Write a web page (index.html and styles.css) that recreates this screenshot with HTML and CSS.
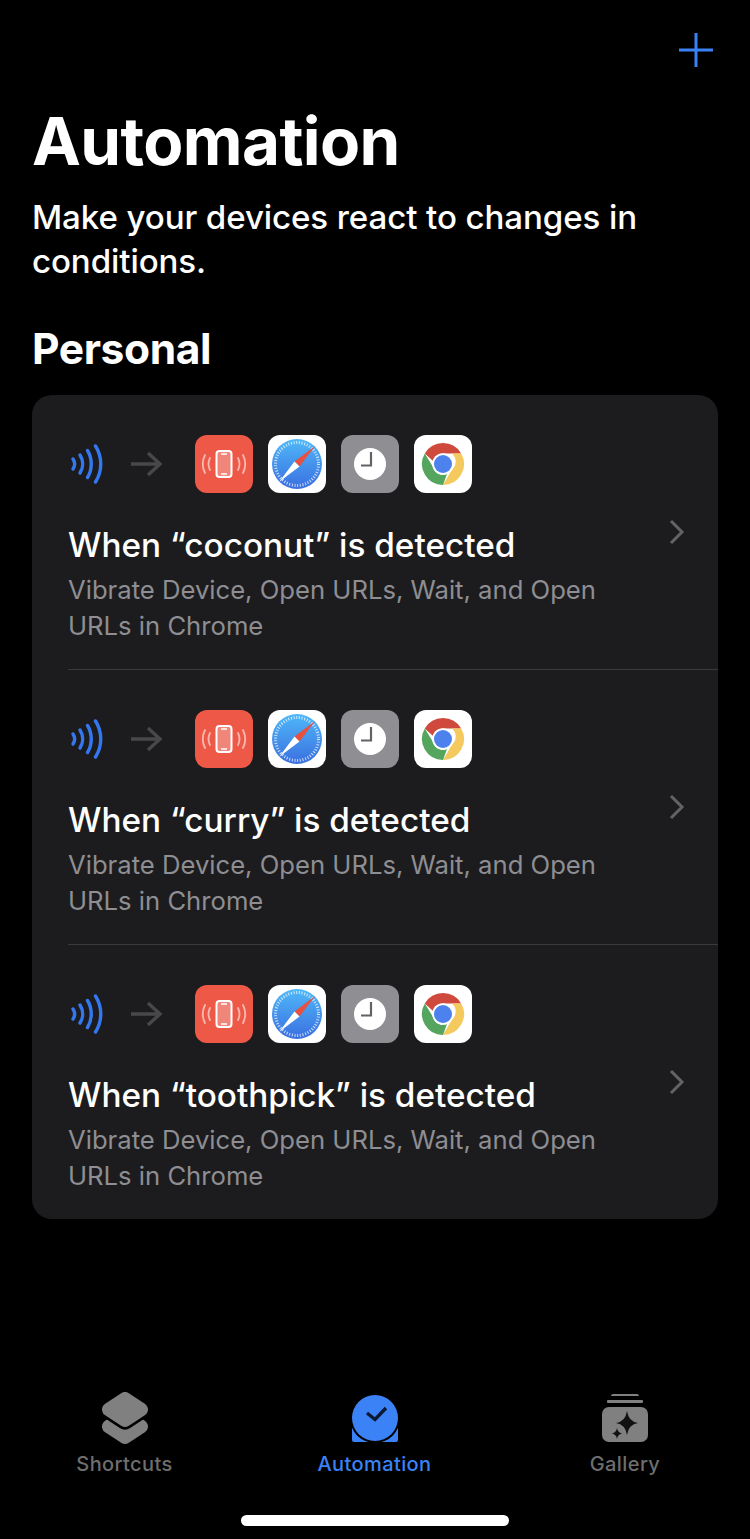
FILE: index.html
```html
<!DOCTYPE html>
<html lang="en">
<head>
    <meta charset="UTF-8">
    <title>Automation</title>
    <link rel="stylesheet" href="styles.css">
</head>
<body>
    <svg class="defs" width="0" height="0">
        <defs>
            <linearGradient id="safariBlue" x1="0" y1="0" x2="0" y2="1">
                <stop offset="0" stop-color="#4fb8f8"/>
                <stop offset="1" stop-color="#3a6fe0"/>
            </linearGradient>
            <symbol id="nfc" viewBox="0 0 34 40">
                <g fill="none" stroke="#3478f0" stroke-width="3.4" stroke-linecap="round">
                    <path d="M3 15c2 3 2 7 0 10"/>
                    <path d="M10 11c3.5 5.5 3.5 12.500 0 18"/>
                    <path d="M17.500 6.500c5 8 5 19 0 27"/>
                    <path d="M25.500 2c7 11 7 25 0 36"/>
                </g>
            </symbol>
            <symbol id="arrow" viewBox="0 0 34 28">
                <path d="M2 14h29M19 3l12 11-12 11" fill="none" stroke="#48484a" stroke-width="3.400"/>
            </symbol>
            <symbol id="vibrate" viewBox="0 0 58 58">
                <rect width="58" height="58" rx="12" fill="#ee5847"/>
                <rect x="21.500" y="16" width="15" height="26" rx="3" fill="#f0857a" stroke="#fff" stroke-width="2"/>
                <path d="M26 19h6M26 39h6" stroke="#fff" stroke-width="1.400"/>
                <g fill="none" stroke="#f8b9b1" stroke-width="1.800" stroke-linecap="round">
                    <path d="M15 23c-2 4-2 8 0 12M10 20c-3 6-3 12 0 18"/>
                    <path d="M43 23c2 4 2 8 0 12M48 20c3 6 3 12 0 18"/>
                </g>
            </symbol>
            <symbol id="safari" viewBox="0 0 58 58">
                <rect width="58" height="58" rx="12" fill="#fff"/>
                <circle cx="29" cy="29" r="25" fill="url(#safariBlue)"/>
                <circle cx="29" cy="29" r="21.500" fill="none" stroke="#fff" stroke-opacity=".75" stroke-width="3" stroke-dasharray="1 1.700"/>
                <path d="M47 11L26.500 26.500 31.500 31.500z" fill="#e8503f"/>
                <path d="M11 47L26.500 26.500 31.500 31.500z" fill="#fff"/>
            </symbol>
            <symbol id="clock" viewBox="0 0 58 58">
                <rect width="58" height="58" rx="12" fill="#8e8e93"/>
                <circle cx="29" cy="29" r="16" fill="#fff"/>
                <path d="M30 17v13.500h-10" fill="none" stroke="#636366" stroke-width="2.200"/>
            </symbol>
            <symbol id="chrome" viewBox="0 0 58 58">
                <rect width="58" height="58" rx="12" fill="#fff"/>
                <path d="M29 8a21 21 0 0 1 18.200 10.500H29a10.500 10.500 0 0 0-10 7.500L10.800 18.500A21 21 0 0 1 29 8z" fill="#cf4a3c"/>
                <path d="M47.200 18.500A21 21 0 0 1 29 50l9-15.500a10.500 10.500 0 0 0 0-16z" fill="#f4c95d"/>
                <path d="M10.800 18.500L19 32a10.500 10.500 0 0 0 14 7l-4 11a21 21 0 0 1-18.200-31.500z" fill="#55a55e"/>
                <circle cx="29" cy="29" r="10.800" fill="#fff"/>
                <circle cx="29" cy="29" r="9" fill="#4d82ee"/>
            </symbol>
        </defs>
    </svg>

    <div class="page">
        <div class="topbar">
            <svg class="plus" viewBox="0 0 36 36"><path d="M18 1v34M1 18h34" stroke="#3b82f6" stroke-width="3"/></svg>
        </div>

        <h1>Automation</h1>
        <p class="subtitle">Make your devices react to changes in conditions.</p>
        <h2>Personal</h2>

        <div class="card">
            <div class="row">
                <div class="flow">
                    <svg class="nfc"><use href="#nfc"/></svg>
                    <svg class="arrow"><use href="#arrow"/></svg>
                    <svg class="app"><use href="#vibrate"/></svg>
                    <svg class="app"><use href="#safari"/></svg>
                    <svg class="app"><use href="#clock"/></svg>
                    <svg class="app"><use href="#chrome"/></svg>
                </div>
                <div class="row-title">When “coconut” is detected</div>
                <div class="row-desc">Vibrate Device, Open URLs, Wait, and Open URLs in Chrome</div>
                <svg class="chevron" viewBox="0 0 16 26"><path d="M2 2l11 11L2 24" fill="none" stroke="#636366" stroke-width="3"/></svg>
            </div>
            <div class="row">
                <div class="flow">
                    <svg class="nfc"><use href="#nfc"/></svg>
                    <svg class="arrow"><use href="#arrow"/></svg>
                    <svg class="app"><use href="#vibrate"/></svg>
                    <svg class="app"><use href="#safari"/></svg>
                    <svg class="app"><use href="#clock"/></svg>
                    <svg class="app"><use href="#chrome"/></svg>
                </div>
                <div class="row-title">When “curry” is detected</div>
                <div class="row-desc">Vibrate Device, Open URLs, Wait, and Open URLs in Chrome</div>
                <svg class="chevron" viewBox="0 0 16 26"><path d="M2 2l11 11L2 24" fill="none" stroke="#636366" stroke-width="3"/></svg>
            </div>
            <div class="row">
                <div class="flow">
                    <svg class="nfc"><use href="#nfc"/></svg>
                    <svg class="arrow"><use href="#arrow"/></svg>
                    <svg class="app"><use href="#vibrate"/></svg>
                    <svg class="app"><use href="#safari"/></svg>
                    <svg class="app"><use href="#clock"/></svg>
                    <svg class="app"><use href="#chrome"/></svg>
                </div>
                <div class="row-title">When “toothpick” is detected</div>
                <div class="row-desc">Vibrate Device, Open URLs, Wait, and Open URLs in Chrome</div>
                <svg class="chevron" viewBox="0 0 16 26"><path d="M2 2l11 11L2 24" fill="none" stroke="#636366" stroke-width="3"/></svg>
            </div>
        </div>

        <div class="tabbar">
            <div class="tab">
                <svg class="tab-icon" viewBox="0 0 48 54">
                    <path d="M24 24l16 10.500L24 45 8 34.500z" fill="#808080" stroke="#808080" stroke-width="14" stroke-linejoin="round"/>
                    <path d="M24 7l16 10.500L24 28 8 17.500z" fill="#000" stroke="#000" stroke-width="19" stroke-linejoin="round"/>
                    <path d="M24 7l16 10.500L24 28 8 17.500z" fill="#808080" stroke="#808080" stroke-width="14" stroke-linejoin="round"/>
                </svg>
                <span>Shortcuts</span>
            </div>
            <div class="tab active">
                <svg class="tab-icon" viewBox="0 0 48 54">
                    <path d="M1 34h46v14a2 2 0 0 1-2 2H3a2 2 0 0 1-2-2z" fill="#3b82f6"/>
                    <circle cx="24" cy="26" r="25" fill="#000"/>
                    <rect x="0" y="0" width="48" height="36" fill="#000"/>
                    <circle cx="24" cy="26" r="23" fill="#3b82f6"/>
                    <path d="M16 21l8 6.500L35 16" fill="none" stroke="#0b1a33" stroke-width="3.400"/>
                </svg>
                <span>Automation</span>
            </div>
            <div class="tab">
                <svg class="tab-icon" viewBox="0 0 48 54">
                    <path d="M10 4c0-1 1-2 2-2h24c1 0 2 1 2 2z" fill="#808080"/>
                    <rect x="6" y="8" width="36" height="3" rx="1" fill="#808080"/>
                    <rect x="1" y="15" width="46" height="35" rx="7" fill="#808080"/>
                    <path d="M26 19Q27.500 29.500 37 31 27.500 32.500 26 43 24.500 32.500 15 31 24.500 29.500 26 19z" fill="#111"/>
                    <path d="M16 36Q16.700 40.800 21.500 41.500 16.700 42.200 16 47 15.300 42.200 10.500 41.500 15.300 40.800 16 36z" fill="#111"/>
                </svg>
                <span>Gallery</span>
            </div>
        </div>
        <div class="home-indicator"></div>
    </div>
</body>
</html>
```

FILE: styles.css
```css
body {
    margin: 0;
    background: #000;
    color: #fff;
    font-family: "Inter", "Liberation Sans", sans-serif;
}

.defs {
    position: absolute;
}

.page {
    height: 1539px;
    display: flex;
    flex-direction: column;
    overflow: hidden;
}

.topbar {
    display: flex;
    justify-content: flex-end;
    padding: 32px 36px 0 0;
    height: 36px;
}

.plus {
    width: 36px;
    height: 36px;
}

h1 {
    margin: 36px 0 0 32px;
    font-size: 65.5px;
    line-height: 76px;
    font-weight: 700;
    letter-spacing: -0.6px;
}

.subtitle {
    margin: 15px 40px 0 32px;
    font-size: 33.1px;
    line-height: 44px;
    font-weight: 500;
    letter-spacing: -0.1px;
}

h2 {
    margin: 41px 0 0 32px;
    font-size: 42.5px;
    line-height: 50px;
    font-weight: 700;
    letter-spacing: -0.4px;
}

.card {
    margin: 21px 32px 0;
    background: #1c1c1e;
    border-radius: 20px;
}

.row {
    position: relative;
    height: 274px;
    margin-left: 36px;
    border-bottom: 1px solid #3a3a3c;
}

.row:last-child {
    border-bottom: 0;
}

.flow {
    display: flex;
    align-items: center;
    padding-top: 40px;
    padding-left: 2px;
    height: 58px;
}

.nfc {
    width: 34px;
    height: 40px;
}

.arrow {
    width: 34px;
    height: 28px;
    margin-left: 25px;
}

.app {
    width: 58px;
    height: 58px;
    margin-left: 15px;
}

.arrow + .app {
    margin-left: 32px;
}

.row-title {
    margin-top: 30px;
    font-size: 33.3px;
    line-height: 44px;
    font-weight: 500;
}

.row-desc {
    margin-top: 5px;
    width: 560px;
    font-size: 25.65px;
    line-height: 36px;
    color: #8e8e93;
}

.chevron {
    position: absolute;
    top: 124px;
    right: 33px;
    width: 16px;
    height: 26px;
}

.tabbar {
    display: grid;
    grid-template-columns: 249px 251px 250px;
    margin-top: auto;
    padding-bottom: 39px;
}

.tab {
    display: flex;
    flex-direction: column;
    align-items: center;
    font-size: 20px;
    line-height: 24px;
    font-weight: 500;
    letter-spacing: 0.4px;
    color: #6e6e6e;
}

.tab.active {
    color: #3b82f6;
}

.tab-icon {
    width: 48px;
    height: 54px;
    margin-bottom: 6px;
}

.home-indicator {
    width: 268px;
    height: 11px;
    margin: 0 auto 13px;
    background: #fff;
    border-radius: 6px;
}
```
